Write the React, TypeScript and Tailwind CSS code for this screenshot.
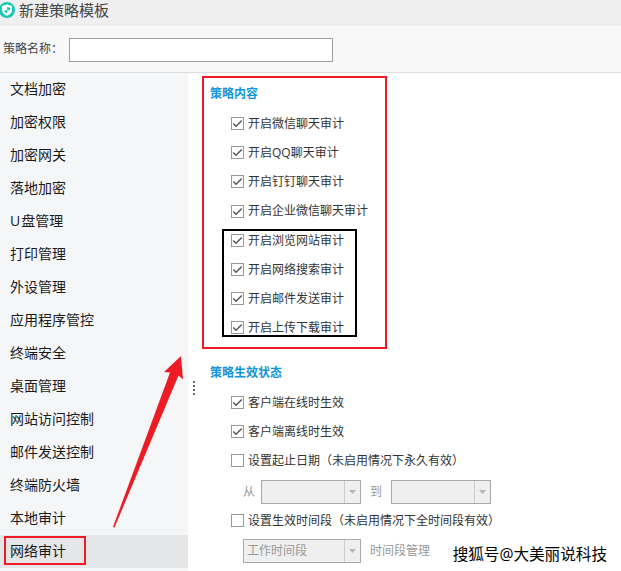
import type { ReactNode } from "react";

const MENU = [
    "文档加密",
    "加密权限",
    "加密网关",
    "落地加密",
    "U 盘管理",
    "打印管理",
    "外设管理",
    "应用程序管控",
    "终端安全",
    "桌面管理",
    "网站访问控制",
    "邮件发送控制",
    "终端防火墙",
    "本地审计",
    "网络审计",
];

const AUDITS = [
    "开启微信聊天审计",
    "开启QQ聊天审计",
    "开启钉钉聊天审计",
    "开启企业微信聊天审计",
    "开启浏览网站审计",
    "开启网络搜索审计",
    "开启邮件发送审计",
    "开启上传下载审计",
];

function CheckRow({ label, checked = false }: { label: string; checked?: boolean }) {
    return (
        <label className="flex h-[29.17px] items-center pl-[29px] text-[#333333]">
            <span className="mr-1 h-[13px] w-[13px] shrink-0 border border-[#999999] bg-white">
                {checked && (
                    <svg viewBox="0 0 11 11" className="block h-[11px] w-[11px]" fill="none" stroke="#555555" strokeWidth="1.4">
                        <path d="M1.3 5.6 4 8.3 9.8 2.4" />
                    </svg>
                )}
            </span>
            <span className="pt-[0.9px]">{label}</span>
        </label>
    );
}

function Select({ children, className }: { children?: ReactNode; className: string }) {
    return (
        <div className={`flex h-6 border border-[#a9a9a9] bg-[#efefef] ${className}`}>
            <span className="flex flex-1 items-center pl-[3px]">{children}</span>
            <span className="flex w-4 items-center justify-center border-l border-[#cccccc]">
                <svg viewBox="0 0 7 4" className="h-1 w-[7px]" fill="#b5b5b5">
                    <path d="M0 0h7L3.5 4z" />
                </svg>
            </span>
        </div>
    );
}

export default function App() {
    return (
        <main className="relative flex h-[571px] w-[621px] flex-col overflow-hidden bg-white font-['Open_Sans','Noto_Sans_CJK_SC',sans-serif] text-[12px] whitespace-nowrap">
            <header className="flex h-[26px] shrink-0 items-center bg-[#efefef] text-[15px] leading-none text-[#444444]">
                <svg viewBox="0 0 16 16" className="mr-1 -ml-px mb-[6px] h-4 w-4 shrink-0">
                    <circle cx="8" cy="8" r="8" fill="#17c9b5" />
                    <path d="M8 2.500 13 4v4c0 2.700-2.100 4.600-5 5.800C5.100 12.600 3 10.700 3 8V4z" fill="#fff" />
                    <path d="M8.200 5v3.200h3V5.800zM8.200 8.200H5.200c.2 1.300 1.200 2.400 3 3.100z" fill="#17c9b5" />
                </svg>
                <span className="mb-[5px]">新建策略模板</span>
            </header>

            <div className="flex h-[47px] shrink-0 items-center border-b border-[#dddddd] bg-[#f8f8f8] pl-[3px] text-[#444444]">
                <span className="mb-px w-[66px]">策略名称：</span>
                <input className="mt-[1px] h-6 w-[264px] border border-[#a0a0a0] bg-white px-2 outline-none" />
            </div>

            <div className="flex flex-1">
                <nav className="w-[188px] bg-[#f4f6f8] text-[14px] text-[#1a1a1a] [word-spacing:-2.5px]">
                    {MENU.map((item) => {
                        const active = item === "网络审计";

                        return (
                            <div
                                key={item}
                                className={`relative flex h-[33px] items-center pb-[2px] pl-[10px] ${active ? "bg-[#e5e6e7]" : ""}`}
                            >
                                {item}
                                {active && (
                                    <span className="absolute top-px left-1 h-[29px] w-[82px] border-2 border-[#ed1c24]" />
                                )}
                            </div>
                        );
                    })}
                </nav>

                <div className="flex w-[14px] flex-col items-center gap-[2px] pt-[308px] pr-[2px]">
                    {[0, 1, 2, 3].map((dot) => (
                        <span key={dot} className="h-[2px] w-[2px] bg-[#666666]" />
                    ))}
                </div>

                <div>
                    <section className="relative mt-[3px] h-[273px] w-[185px] border-2 border-[#ed1c24] pt-[5px] pl-[6px]">
                        <h2 className="mb-[6px] h-5 leading-[21px] font-bold text-[#1296db]">策略内容</h2>
                        <div className="-ml-[8px]">
                            {AUDITS.map((label) => (
                                <CheckRow key={label} label={label} checked />
                            ))}
                        </div>
                        <span className="absolute top-[151px] left-[18px] h-[108px] w-[135px] border-2 border-black" />
                    </section>

                    <section className="pt-[13px]">
                        <h2 className="mb-[6px] h-5 pl-[8px] leading-[21px] font-bold text-[#1296db]">策略生效状态</h2>
                        <CheckRow label="客户端在线时生效" checked />
                        <CheckRow label="客户端离线时生效" checked />
                        <CheckRow label="设置起止日期（未启用情况下永久有效）" />
                        <div className="mt-[4.5px] flex items-center pl-[41px] text-[#999999]">
                            <span className="w-[18px]">从</span>
                            <Select className="w-[100px]" />
                            <span className="w-[30px] pl-[9px]">到</span>
                            <Select className="w-[100px]" />
                        </div>
                        <div className="mt-[2px]">
                            <CheckRow label="设置生效时间段（未启用情况下全时间段有效）" />
                        </div>
                        <div className="mt-[4px] flex items-center pl-[41px] text-[#999999]">
                            <Select className="w-[118px]">工作时间段</Select>
                            <span className="pl-[9px]">时间段管理</span>
                        </div>
                    </section>
                </div>
            </div>

            <svg viewBox="0 0 621 571" className="pointer-events-none absolute inset-0 h-full w-full" fill="#ed1c24">
                <path d="M181 356 183 379.500 178.500 375.500 114.500 527.500 113 527 170 372.500 164 372z" />
            </svg>
            <span className="absolute right-[14px] bottom-[5px] text-[15.6px] leading-6 text-black [text-shadow:1px_1px_0_#fff,-1px_-1px_0_#fff]">
                搜狐号@大美丽说科技
            </span>
        </main>
    );
}
